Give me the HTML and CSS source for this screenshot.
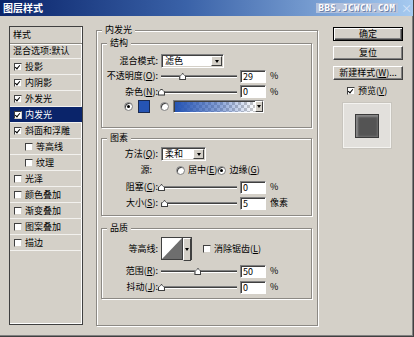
FILE: index.html
```html
<!DOCTYPE html>
<html lang="zh-CN">
<head>
  <meta charset="UTF-8">
  <title>图层样式</title>
  <link rel="stylesheet" href="styles.css">
</head>
<body>
<div class="dialog">
  <div class="titlebar">
    <span class="title">图层样式</span>
    <span class="mark">BBS.JCWCN.COM</span>
    <span class="close">×</span>
  </div>

  <div class="body">
    <!-- style list -->
    <ul class="styles">
      <li class="head">样式</li>
      <li class="blend">混合选项:默认</li>
      <li><span class="cb on"></span>投影</li>
      <li><span class="cb on"></span>内阴影</li>
      <li><span class="cb on"></span>外发光</li>
      <li class="sel"><span class="cb on"></span>内发光</li>
      <li><span class="cb on"></span>斜面和浮雕</li>
      <li class="sub"><span class="cb"></span>等高线</li>
      <li class="sub"><span class="cb"></span>纹理</li>
      <li><span class="cb"></span>光泽</li>
      <li><span class="cb"></span>颜色叠加</li>
      <li><span class="cb"></span>渐变叠加</li>
      <li><span class="cb"></span>图案叠加</li>
      <li><span class="cb"></span>描边</li>
    </ul>

    <div class="main">
      <fieldset class="group outer">
        <legend>内发光</legend>

        <fieldset class="group g-struct">
          <legend>结构</legend>
          <div class="row r-mode">
            <span class="lbl">混合模式:</span>
            <div class="select w-mode"><span class="val">滤色</span><span class="drop"><i></i></span></div>
          </div>
          <div class="row r-opacity">
            <span class="lbl">不透明度(<u>O</u>):</span>
            <div class="slider"><div class="track"></div><span class="thumb" style="left: 28%"></span></div>
            <span class="num">29</span><span class="unit">%</span>
          </div>
          <div class="row r-noise">
            <span class="lbl">杂色(<u>N</u>):</span>
            <div class="slider"><div class="track"></div><span class="thumb" style="left: 0%"></span></div>
            <span class="num">0</span><span class="unit">%</span>
          </div>
          <div class="row r-color">
            <span class="radio on"></span>
            <span class="swatch"></span>
            <span class="radio"></span>
            <div class="gradient"><span class="grad"></span><span class="drop small"><i></i></span></div>
          </div>
        </fieldset>

        <fieldset class="group g-elem">
          <legend>图素</legend>
          <div class="row r-method">
            <span class="lbl">方法(<u>Q</u>):</span>
            <div class="select w-method"><span class="val">柔和</span><span class="drop"><i></i></span></div>
          </div>
          <div class="row r-source">
            <span class="lbl short">源:</span>
            <span class="radio"></span><span class="opt">居中(<u>E</u>)</span>
            <span class="radio on"></span><span class="opt">边缘(<u>G</u>)</span>
          </div>
          <div class="row r-choke">
            <span class="lbl">阻塞(<u>C</u>):</span>
            <div class="slider"><div class="track"></div><span class="thumb" style="left: 0%"></span></div>
            <span class="num">0</span><span class="unit">%</span>
          </div>
          <div class="row r-size">
            <span class="lbl">大小(<u>S</u>):</span>
            <div class="slider"><div class="track"></div><span class="thumb" style="left: 4%"></span></div>
            <span class="num">5</span><span class="unit">像素</span>
          </div>
        </fieldset>

        <fieldset class="group g-quality">
          <legend>品质</legend>
          <div class="row r-contour">
            <span class="lbl">等高线:</span>
            <div class="contour">
              <span class="curve">
                <svg width="20" height="21" viewBox="0 0 20 21"><polygon points="0,21 20,0 20,21" fill="#6e6e6e"/></svg>
              </span>
              <span class="drop tall"><i></i></span>
            </div>
            <span class="cb aa"></span><span class="opt">消除锯齿(<u>L</u>)</span>
          </div>
          <div class="row r-range">
            <span class="lbl">范围(<u>R</u>):</span>
            <div class="slider"><div class="track"></div><span class="thumb" style="left: 48%"></span></div>
            <span class="num">50</span><span class="unit">%</span>
          </div>
          <div class="row r-jitter">
            <span class="lbl">抖动(<u>J</u>):</span>
            <div class="slider"><div class="track"></div><span class="thumb" style="left: 0%"></span></div>
            <span class="num">0</span><span class="unit">%</span>
          </div>
        </fieldset>
      </fieldset>
    </div>

    <div class="side">
      <div class="btn default">确定</div>
      <div class="btn">复位</div>
      <div class="btn">新建样式(<u>W</u>)...</div>
      <div class="preview-check"><span class="cb on"></span>预览(<u>V</u>)</div>
      <div class="preview"><span class="chip"></span></div>
    </div>
  </div>
</div>
</body>
</html>
```

FILE: styles.css
```css
* {
  box-sizing: border-box;
}
body {
  margin: 0;
  background: #d4d0c8;
  font-family: "Noto Sans CJK SC", "DejaVu Sans", sans-serif;
  font-size: 9px;
  line-height: 12px;
  color: #000;
}
u {
  text-decoration: underline;
}

.dialog {
  width: 414px;
  height: 337px;
  background: #d4d0c8;
  border-right: 1px solid #404040;
  border-bottom: 1px solid #404040;
  box-shadow: inset -1px -1px 0 #808080;
  overflow: hidden;
}

/* title bar */
.titlebar {
  height: 16px;
  display: flex;
  align-items: center;
  padding: 0 4px 0 3px;
  background: linear-gradient(90deg, #0a246a 0%, #3a62a8 45%, #a6caf0 100%);
}
.title {
  color: #fff;
  font-weight: bold;
  font-size: 10px;
}
.mark {
  margin-left: auto;
  width: 82px;
  height: 10px;
  line-height: 10px;
  background: #b4c2dc;
  color: #fff;
  font-family: "DejaVu Sans Mono", monospace;
  font-weight: bold;
  font-size: 9px;
  text-align: center;
  letter-spacing: 0.5px;
  text-shadow: 1px 1px 0 #6a7fa8;
}
.close {
  width: 8px;
  margin-left: 3px;
  color: #d8e4f8;
  font-size: 11px;
  line-height: 10px;
}

.body {
  display: flex;
  padding: 8px 0 0 9px;
}

/* style list */
.styles {
  list-style: none;
  margin: 2px 0 0;
  padding: 0;
  width: 74px;
  height: 299px;
  border: 1px solid #404040;
  box-shadow: inset -1px -1px 0 #fff;
}
.styles li {
  display: flex;
  align-items: center;
  height: 16px;
  padding-left: 4px;
  border-bottom: 1px solid #f2f1ee;
  white-space: nowrap;
}
.styles li.head {
  height: 17px;
  padding-left: 3px;
  border-bottom: 1px solid #8a8780;
  box-shadow: 0 1px 0 #fff;
}
.styles li.blend {
  height: 15px;
  padding-left: 3px;
}
.styles li.sub {
  padding-left: 15px;
}
.styles li.sel {
  background: #0a246a;
  color: #fff;
}

/* checkbox and radio */
.cb {
  position: relative;
  display: inline-block;
  width: 8px;
  height: 8px;
  margin-right: 3px;
  background: #fff;
  border: 1px solid;
  border-color: #404040 #d4d0c8 #d4d0c8 #404040;
  flex: none;
}
.cb.on::after {
  content: "";
  position: absolute;
  left: 1px;
  top: 0;
  width: 2px;
  height: 4px;
  border: solid #000;
  border-width: 0 1px 1px 0;
  transform: rotate(40deg);
}
.radio {
  position: relative;
  display: inline-block;
  width: 9px;
  height: 9px;
  border-radius: 50%;
  background: #fff;
  border: 1px solid #808080;
  box-shadow: inset 1px 1px 0 #404040;
  flex: none;
}
.radio.on::after {
  content: "";
  position: absolute;
  left: 2px;
  top: 2px;
  width: 3px;
  height: 3px;
  border-radius: 50%;
  background: #000;
}

/* group boxes */
.main {
  width: 222px;
  margin-left: 13px;
}
.group {
  margin: 0;
  padding: 0;
  min-width: 0;
  border: 1px solid #8c8984;
  box-shadow: inset 1px 1px 0 #fff, 1px 1px 0 #fff;
}
.group legend {
  padding: 0 3px;
  margin-left: 5px;
  background: #d4d0c8;
  line-height: 12px;
}
.outer {
  height: 302px;
  padding: 0 5px 0 4px;
}
.outer > legend {
  margin-left: 1px;
}
.g-struct {
  margin-top: 1px;
  height: 91px;
}
.g-elem {
  margin-top: 4px;
  height: 84px;
}
.g-quality {
  margin-top: 6px;
  height: 77px;
}

/* rows */
.row {
  display: flex;
  align-items: center;
  white-space: nowrap;
}
.lbl {
  width: 56px;
  margin-right: 3px;
  text-align: right;
  flex: none;
}
.lbl.short {
  width: 50px;
  margin-right: 2px;
}
.r-mode { margin-top: 5px; height: 14px; }
.r-opacity { height: 16px; }
.r-noise { height: 15px; }
.r-color { height: 14px; padding-left: 22px; }
.r-method { margin-top: 3px; height: 14px; }
.r-source { height: 18px; }
.r-choke { height: 16px; }
.r-size { height: 16px; }
.r-contour { margin-top: 3px; height: 23px; }
.r-range { margin-top: 3px; height: 16px; }
.r-jitter { height: 16px; }

.opt {
  margin-left: 3px;
}
.r-source .radio:nth-of-type(2) {
  margin-left: 22px;
}

/* select */
.select {
  display: flex;
  height: 14px;
  background: #fff;
  border: 1px solid;
  border-color: #808080 #fff #fff #808080;
  box-shadow: inset 1px 1px 0 #404040, inset -1px -1px 0 #d4d0c8;
}
.w-mode { width: 63px; }
.w-method { width: 45px; }
.select .val {
  flex: 1;
  padding-left: 3px;
  line-height: 12px;
}
.drop {
  display: flex;
  align-items: center;
  justify-content: center;
  width: 11px;
  margin: 1px;
  background: #d4d0c8;
  border: 1px solid;
  border-color: #fff #404040 #404040 #fff;
  flex: none;
}
.drop i {
  width: 0;
  height: 0;
  border-left: 2.5px solid transparent;
  border-right: 2.5px solid transparent;
  border-top: 3px solid #000;
}
.drop.small {
  width: 8px;
  margin: 0;
}
.drop.tall {
  width: 8px;
  margin: 0;
  height: 23px;
}

/* slider */
.slider {
  position: relative;
  width: 76px;
  height: 10px;
  flex: none;
}
.track {
  margin-top: 4px;
  height: 3px;
  background: #404040;
  border-top: 1px solid #808080;
  border-bottom: 1px solid #fff;
}
.thumb {
  position: absolute;
  top: 2px;
  width: 7px;
  height: 7px;
  margin-left: -3px;
  background: #fff;
  border: 1px solid #404040;
  clip-path: polygon(50% 0, 100% 45%, 100% 100%, 0 100%, 0 45%);
}
.thumb::before {
  content: "";
  position: absolute;
  left: -1px;
  top: -1px;
  width: 7px;
  height: 7px;
  background: #404040;
  clip-path: polygon(50% 0, 100% 45%, 100% 100%, 0 100%, 0 45%, 15% 48%, 15% 85%, 85% 85%, 85% 48%, 50% 14%, 15% 48%, 0 45%);
}

/* number fields */
.num {
  width: 26px;
  height: 13px;
  margin-left: 3px;
  padding-left: 2px;
  line-height: 11px;
  background: #fff;
  border: 1px solid;
  border-color: #808080 #fff #fff #808080;
  box-shadow: inset 1px 1px 0 #404040;
  flex: none;
}
.unit {
  margin-left: 4px;
}

/* colour row */
.swatch {
  width: 12px;
  height: 13px;
  margin: 0 10px 0 5px;
  background: #2554b4;
  border: 1px solid #1a2a50;
  flex: none;
}
.gradient {
  display: flex;
  width: 91px;
  height: 13px;
  margin-left: 4px;
  border: 1px solid;
  border-color: #808080 #fff #fff #808080;
  box-shadow: inset 1px 1px 0 #404040;
}
.grad {
  flex: 1;
  margin: 1px 0 0 1px;
  background:
    linear-gradient(90deg, #2554b4 0%, rgba(37, 84, 180, 0.55) 55%, rgba(37, 84, 180, 0) 100%),
    repeating-conic-gradient(#c8c8c8 0 25%, #fff 0 50%) 0 0 / 6px 6px;
}

/* contour */
.contour {
  display: flex;
  height: 23px;
  margin-right: 11px;
  border: 1px solid #404040;
}
.curve {
  width: 21px;
  background: #fff;
  border-right: 1px solid #404040;
}
.curve svg {
  display: block;
}
.cb.aa {
  margin-right: 0;
}

/* right column */
.side {
  width: 70px;
  margin-left: 15px;
  margin-top: 3px;
}
.btn {
  height: 14px;
  margin-bottom: 5px;
  text-align: center;
  line-height: 12px;
  background: #d4d0c8;
  border: 1px solid;
  border-color: #fff #404040 #404040 #fff;
  box-shadow: inset -1px -1px 0 #808080;
  white-space: nowrap;
}
.btn.default {
  border: 1px solid #000;
  box-shadow: inset 1px 1px 0 #fff, inset -1px -1px 0 #404040, inset -2px -2px 0 #808080;
}
.btn:nth-child(2) {
  margin-bottom: 6px;
}
.preview-check {
  display: flex;
  align-items: center;
  height: 12px;
  margin-top: 4px;
  padding-left: 14px;
}
.preview-check .cb {
  margin-right: 3px;
}
.preview {
  display: flex;
  align-items: center;
  justify-content: center;
  width: 48px;
  height: 45px;
  margin: 6px 0 0 10px;
  background: #e2e0dc;
  border: 1px solid #f4f3f0;
  box-shadow: 0 0 0 1px #c8c5be;
}
.chip {
  width: 24px;
  height: 24px;
  background: #545454;
  border: 1px solid #3a3a3a;
  box-shadow: inset 2px 2px 2px #8a8a8a, inset -1px -1px 2px #707070;
}
```
